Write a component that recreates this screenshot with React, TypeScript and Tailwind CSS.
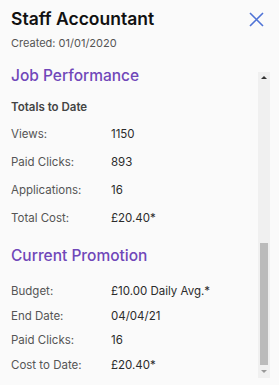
import React from "react";

const font = { fontFamily: 'Inter, "Open Sans", "Liberation Sans", sans-serif' };

function Row({ label, value, tall }: { label: string; value: string; tall?: boolean }) {
  return (
    <div className={`grid grid-cols-[100px_1fr] text-[11.5px] ${tall ? "leading-[28px]" : "leading-[24.5px]"}`}>
      <span className="text-[#555555]">{label}</span>
      <span className="text-[#2b2b2b]">{value}</span>
    </div>
  );
}

export default function App() {
  return (
    <div className="w-[279px] h-[385px] bg-[#fafafa] flex flex-col overflow-hidden" style={font}>
      <div className="flex flex-row justify-between pl-[11px] pr-[15px]">
        <div className="flex flex-col">
          <h1 className="mt-[7px] text-[17.5px] leading-[24px] font-semibold text-[#111111]">Staff Accountant</h1>
          <p className="mt-[4px] text-[11px] leading-[16px] text-[#555555]">Created: 01/01/2020</p>
        </div>
        <button className="mt-[12px] w-[15px] h-[15px] self-start" aria-label="Close">
          <svg width="15" height="15" viewBox="0 0 15 15" fill="none">
            <path d="M1 1L14 14M14 1L1 14" stroke="#4f73d6" strokeWidth="1.6" />
          </svg>
        </button>
      </div>
      <div className="flex flex-row flex-1 min-h-0">
        <div className="flex-1 flex flex-col pl-[11px]">
          <h2 className="mt-[15px] text-[15.5px] leading-[20px] font-medium text-[#7047b9]">Job Performance</h2>
          <h3 className="mt-[13px] text-[11.5px] leading-[16px] font-semibold text-[#444444]">Totals to Date</h3>
          <div className="mt-[5px] flex flex-col">
            <Row label="Views:" value="1150" tall />
            <Row label="Paid Clicks:" value="893" tall />
            <Row label="Applications:" value="16" tall />
            <Row label="Total Cost:" value="£20.40*" tall />
          </div>
          <h2 className="mt-[14px] text-[15.5px] leading-[20px] font-medium text-[#7047b9]">Current Promotion</h2>
          <div className="mt-[13px] flex flex-col">
            <Row label="Budget:" value="£10.00 Daily Avg.*" />
            <Row label="End Date:" value="04/04/21" />
            <Row label="Paid Clicks:" value="16" />
            <Row label="Cost to Date:" value="£20.40*" />
          </div>
        </div>
        <div className="mt-[21px] mr-[9px] w-[12px] h-[306px] bg-[#f0f0f0] flex flex-col items-center">
          <div className="mt-[4px] w-0 h-0 border-l-[3px] border-r-[3px] border-b-[3px] border-l-transparent border-r-transparent border-b-[#333333]" />
          <div className="flex-1" />
          <div className="w-[8px] h-[122px] bg-[#bbbbbb]" />
          <div className="mt-[5px] mb-[5px] w-0 h-0 border-l-[3px] border-r-[3px] border-t-[3px] border-l-transparent border-r-transparent border-t-[#999999]" />
        </div>
      </div>
    </div>
  );
}
